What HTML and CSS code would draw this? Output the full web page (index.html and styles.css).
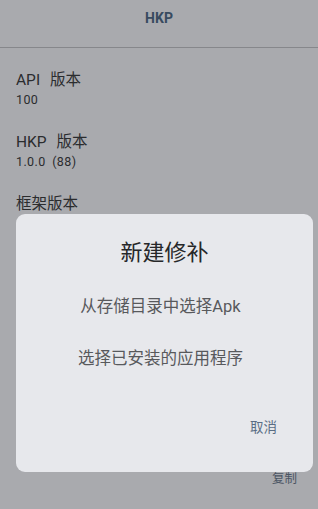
FILE: index.html
```html
<!DOCTYPE html>
<html lang="zh-CN">
<head>
    <meta charset="UTF-8">
    <title>HKP</title>
    <link rel="stylesheet" href="styles.css">
</head>
<body>
    <div class="header">HKP</div>
    <div class="lista">
        <div class="pozycja">
            <div class="tytul">API 版本</div>
            <div class="wartosc">100</div>
        </div>
        <div class="pozycja">
            <div class="tytul">HKP 版本</div>
            <div class="wartosc">1.0.0 (88)</div>
        </div>
        <div class="pozycja">
            <div class="tytul">框架版本</div>
            <div class="wartosc"></div>
        </div>
    </div>
    <div class="akcje">
        <button class="kopiuj">复制</button>
    </div>

    <div class="dialog">
        <div class="dialog-tytul">新建修补</div>
        <div class="opcja">从存储目录中选择Apk</div>
        <div class="opcja">选择已安装的应用程序</div>
        <div class="dialog-przyciski">
            <button class="anuluj">取消</button>
        </div>
    </div>
</body>
</html>
```

FILE: styles.css
```css
body {
    margin: 0;
    background: #a9aaae;
    font-family: Roboto, "Noto Sans CJK SC", sans-serif;
    color: #2b2c2e;
    height: 509px;
    overflow: hidden;
}
.header {
    height: 40px;
    padding-top: 7px;
    line-height: 22px;
    text-align: center;
    font-size: 14px;
    font-weight: bold;
    color: #384b60;
    border-bottom: 1px solid #86878b;
}
.lista {
    padding-top: 10px;
}
.pozycja {
    padding: 11px 16px;
}
.tytul {
    font-size: 15.5px;
    line-height: 22px;
    word-spacing: 6px;
}
.wartosc {
    font-size: 12.5px;
    line-height: 18px;
    height: 18px;
    letter-spacing: 0.4px;
    word-spacing: 3px;
}
.akcje {
    display: flex;
    justify-content: flex-end;
    padding-right: 17px;
    margin-top: 225px;
}
button {
    font-family: Roboto, "Noto Sans CJK SC", sans-serif;
    background: none;
    border: none;
    padding: 0 4px;
    cursor: pointer;
}
.kopiuj {
    font-size: 12.5px;
    line-height: 20px;
    color: #4b5564;
}
.dialog {
    position: absolute;
    top: 214px;
    left: 16px;
    width: 297px;
    height: 258px;
    box-sizing: border-box;
    background: #e7e8ec;
    border-radius: 9px;
    padding-top: 24px;
    display: flex;
    flex-direction: column;
}
.dialog-tytul {
    font-size: 22px;
    line-height: 30px;
    text-align: center;
    color: #262729;
    margin-bottom: 13px;
}
.opcja {
    font-size: 16.5px;
    line-height: 24px;
    padding: 14px 8px 14px 0;
    text-align: center;
    color: #58595c;
    cursor: pointer;
}
.dialog-przyciski {
    display: flex;
    justify-content: flex-end;
    padding: 31px 32px 0 0;
}
.anuluj {
    font-size: 13.5px;
    line-height: 22px;
    color: #5a6d85;
}
```
